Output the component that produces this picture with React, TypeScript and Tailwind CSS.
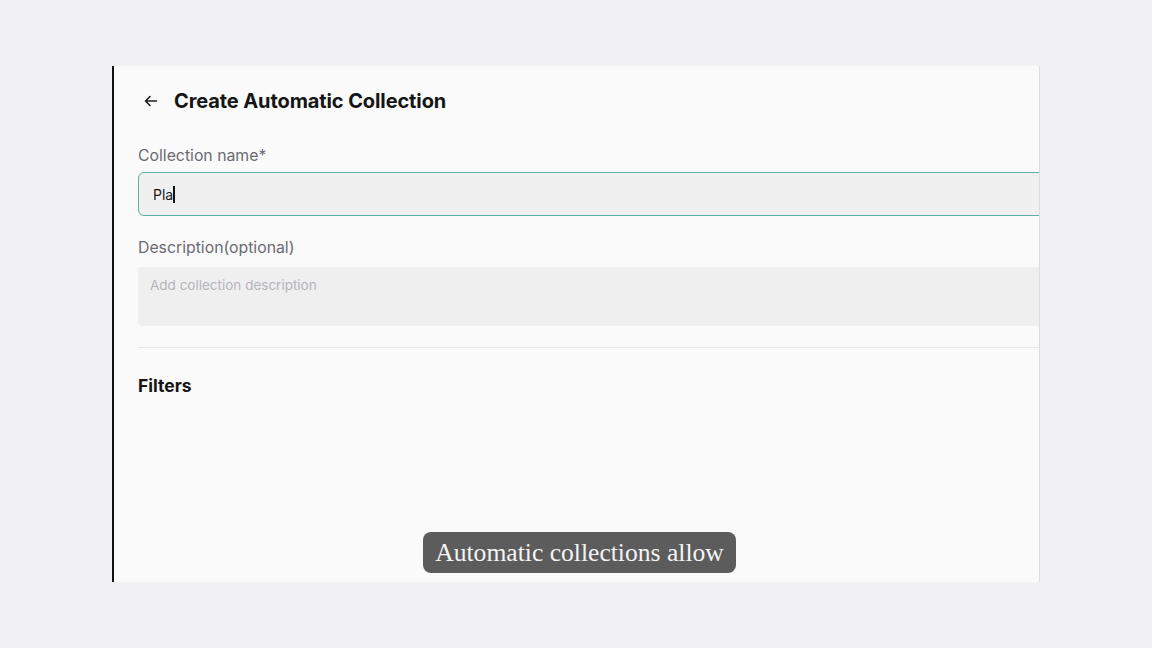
import React from "react";

export default function App() {
  return (
    <div className="relative w-[1152px] h-[648px] bg-[#f1f1f3] overflow-hidden" style={{ fontFamily: "Inter, 'Noto Sans', sans-serif" }}>
      <div className="pt-[66px] pl-[112px]">
        <div className="w-[928px] h-[516px] bg-[#fafafa] border-l-2 border-l-[#111] border-r border-r-[#dcdcdf] overflow-hidden">
          <div className="w-[1100px] pl-[24px]">
            <div className="flex items-center h-[70px]">
              <svg width="16" height="16" viewBox="0 0 16 16" className="ml-[5px] mr-[15px]" fill="none" stroke="#1c1c1c" strokeWidth="1.6" strokeLinecap="round" strokeLinejoin="round">
                <path d="M13.5 8H2.5M7 3.5L2.5 8L7 12.5" />
              </svg>
              <h1 className="text-[20px] font-bold text-[#151515] tracking-[-0.1px]">Create Automatic Collection</h1>
            </div>
            <div className="text-[15.8px] text-[#6b6b72] mt-[10px] leading-[20px]">Collection name*</div>
            <div className="mt-[6px] h-[44px] w-[1000px] rounded-[6px] border border-[#5bb3a2] bg-[#f0f0f1] flex items-center pl-[14px]">
              <span className="text-[14px] text-[#1a1a1a]">Pla</span>
              <span className="w-[1.5px] h-[17px] bg-[#111]" />
            </div>
            <div className="text-[15.8px] text-[#6b6b72] mt-[22px] leading-[20px]">Description(optional)</div>
            <div className="mt-[9px] h-[59px] w-[1000px] rounded-[4px] bg-[#efeff0] pl-[12px] pt-[5px]">
              <span className="text-[13.5px] text-[#b5b5ba]">Add collection description</span>
            </div>
            <div className="mt-[21px] h-px w-[1000px] bg-[#e6e6e8]" />
            <div className="mt-[25px] text-[17.5px] font-bold text-[#151515]">Filters</div>
          </div>
        </div>
      </div>
      <div className="absolute left-[423px] top-[532px] w-[313px] h-[41px] rounded-[8px] bg-[#5c5c5c] flex items-center justify-center">
        <span className="text-[25.6px] text-[#f4f4f4] whitespace-nowrap leading-none" style={{ fontFamily: "'Liberation Serif', serif" }}>Automatic collections allow</span>
      </div>
    </div>
  );
}
